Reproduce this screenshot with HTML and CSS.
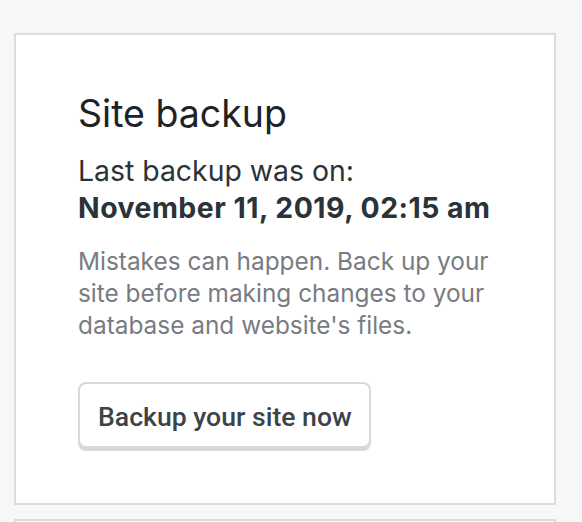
FILE: index.html
```html
<!DOCTYPE html>
<html>
<head>
<meta charset="utf-8">
<link rel="stylesheet" href="styles.css">
</head>
<body>
<div class="page">
  <section class="card">
    <h2 class="title">Site backup</h2>
    <p class="last">Last backup was on:</p>
    <p class="date">November 11, 2019, 02:15 am</p>
    <p class="desc">Mistakes can happen. Back up your site before making changes to your database and website's files.</p>
    <button class="btn">Backup your site now</button>
  </section>
  <section class="card next"></section>
</div>
</body>
</html>
```
FILE: styles.css
```css
html, body {
  margin: 0;
  padding: 0;
  background: #f6f7f7;
}
body {
  font-family: Inter, "Liberation Sans", sans-serif;
  color: #1d2327;
}
.page {
  padding: 33px 0 0 14px;
  width: 542px;
  display: flex;
  flex-direction: column;
  gap: 14px;
}
.card {
  background: #fff;
  border: 2px solid #dcdcde;
  padding: 57px 62px 55px 62px;
  display: flex;
  flex-direction: column;
  align-items: flex-start;
}
.card.next {
  padding: 0;
  height: 40px;
}
.title {
  margin: 0;
  font-size: 37.5px;
  font-weight: 400;
  line-height: 44px;
  color: #1d2327;
}
.last {
  margin: 18px 0 0;
  font-size: 28.4px;
  line-height: 34px;
  color: #2c3338;
}
.date {
  margin: 3px 0 0;
  font-size: 28.4px;
  line-height: 34px;
  font-weight: 700;
  letter-spacing: 0.5px;
  color: #2c3338;
}
.desc {
  margin: 20px 0 0;
  font-size: 24.4px;
  line-height: 32px;
  color: #787c82;
  max-width: 430px;
}
.btn {
  margin-top: 41px;
  font-family: Roboto, "Liberation Sans", sans-serif;
  font-size: 26.6px;
  font-weight: 500;
  color: #3c434a;
  background: #fff;
  border: 2px solid #d8d8d8;
  border-radius: 8px;
  box-shadow: 0 3px 0 #d8d8d8;
  height: 66px;
  padding: 3px 17px 0 18px;
}
```
